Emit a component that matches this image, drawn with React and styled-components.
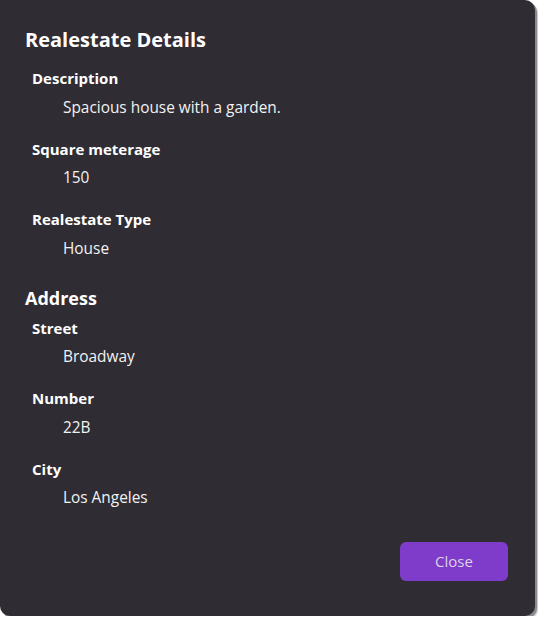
import styled, { createGlobalStyle } from "styled-components";

const GlobalStyle = createGlobalStyle`
  body {
    margin: 0;
    background: #ffffff;
    font-family: "Open Sans", "Noto Sans", sans-serif;
  }
`;

const details = [
  { label: "Description", value: "Spacious house with a garden." },
  { label: "Square meterage", value: "150" },
  { label: "Realestate Type", value: "House" },
];

const address = [
  { label: "Street", value: "Broadway" },
  { label: "Number", value: "22B" },
  { label: "City", value: "Los Angeles" },
];

function App() {
  return (
    <>
      <GlobalStyle />
      <Dialog>
        <Title>Realestate Details</Title>
        <FieldList>
          {details.map((d) => (
            <Field key={d.label}>
              <Label>{d.label}</Label>
              <Value>{d.value}</Value>
            </Field>
          ))}
        </FieldList>
        <SubTitle>Address</SubTitle>
        <FieldList>
          {address.map((d) => (
            <Field key={d.label}>
              <Label>{d.label}</Label>
              <Value>{d.value}</Value>
            </Field>
          ))}
        </FieldList>
        <Footer>
          <CloseBtn>Close</CloseBtn>
        </Footer>
      </Dialog>
    </>
  );
}

const Dialog = styled.div`
  box-sizing: border-box;
  width: 535px;
  height: 616px;
  padding: 26px 27px 0 25px;
  display: flex;
  flex-direction: column;
  background-color: #2f2c33;
  color: #ffffff;
  border-radius: 0 10px 10px 10px;
  box-shadow: 2px 2px 0 #8a8a8a, 3px 3px 1px #c4c4c4;
`;

const Title = styled.h2`
  margin: 0 0 14px;
  font-size: 20px;
  line-height: 28px;
  font-weight: 700;
`;

const SubTitle = styled.h3`
  margin: 27px 0 8px;
  font-size: 18px;
  line-height: 24px;
  font-weight: 700;
`;

const FieldList = styled.div`
  display: flex;
  flex-direction: column;
  gap: 21px;
  padding-left: 7px;
`;

const Field = styled.div`
  display: flex;
  flex-direction: column;
  gap: 9.5px;
`;

const Label = styled.span`
  font-size: 15px;
  line-height: 20px;
  font-weight: 700;
`;

const Value = styled.span`
  padding-left: 31px;
  font-size: 15.4px;
  line-height: 20px;
  color: #f2f2f2;
`;

const Footer = styled.div`
  display: flex;
  justify-content: flex-end;
  margin-top: 33.5px;
`;

const CloseBtn = styled.button`
  width: 108px;
  height: 39px;
  border: none;
  border-radius: 6px;
  background-color: #7f3bc9;
  color: #ddd3ea;
  font-family: inherit;
  font-size: 15px;
  cursor: pointer;
`;

export default App;
